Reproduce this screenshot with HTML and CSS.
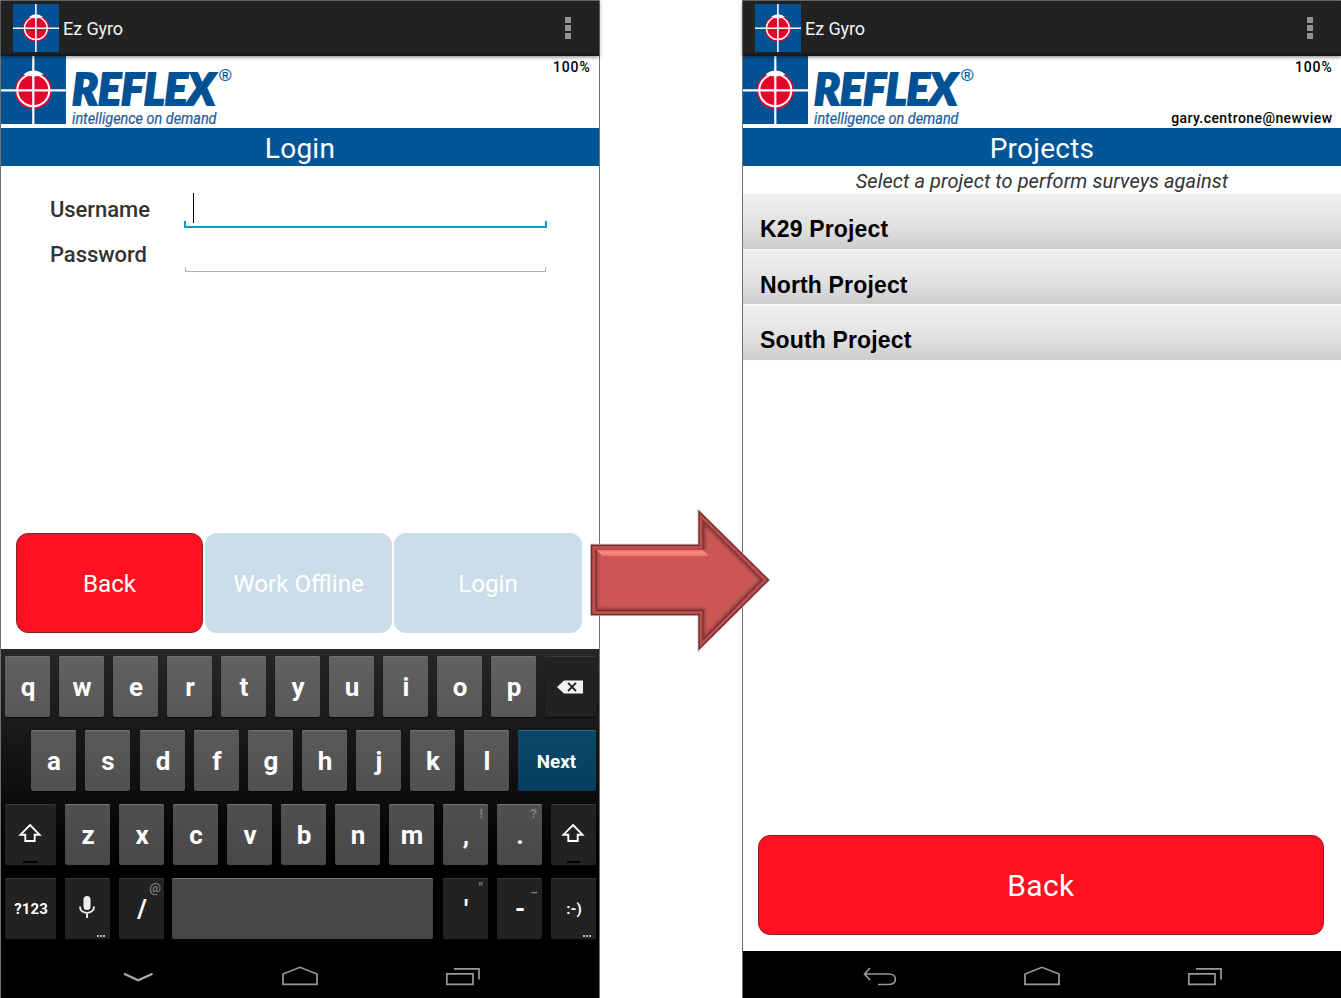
FILE: index.html
```html
<!DOCTYPE html>
<html lang="en">
<head>
<meta charset="utf-8">
<title>Ez Gyro</title>
<link rel="stylesheet" href="styles.css">
</head>
<body>
<svg class="defs" width="0" height="0" aria-hidden="true">
  <symbol id="target" viewBox="0 0 65 68" preserveAspectRatio="none">
    <rect width="65" height="68" fill="#005295"/>
    <circle cx="32.3" cy="34.5" r="18.6" fill="#e2062c"/>
    <path d="M32.3 0V68M0 34.3H65" stroke="#fff" stroke-width="2.2"/>
    <circle cx="32.3" cy="34.2" r="16" fill="none" stroke="#fff" stroke-width="2"/>
    <path d="M22.5 18.500Q27 14.500 32.500 14.500T42.500 18.500Q37 20.500 32.500 20.500T22.500 18.500Z" fill="#fff"/>
  </symbol>
  <symbol id="home" viewBox="0 0 38 22">
    <path d="M2 19.300V9L19 2.300L36 9V19.300Z" fill="none" stroke="#999" stroke-width="1.700"/>
  </symbol>
  <symbol id="recent" viewBox="0 0 38 22">
    <path d="M2.800 8.800H29V19.300H2.800ZM10 3.800H35V14.500" fill="none" stroke="#999" stroke-width="1.700"/>
  </symbol>
  <symbol id="shift" viewBox="0 0 24 20">
    <path d="M12 2L21.500 11.700H16.700V18H7.300V11.700H2.500Z" fill="none" stroke="#fff" stroke-width="1.900"/>
  </symbol>
</svg>

<main class="stage">
  <section class="phone">
    <header class="appbar">
      <svg class="app-icon"><use href="#target"/></svg>
      <span class="app-name">Ez Gyro</span>
      <span class="overflow"><i></i><i></i><i></i></span>
    </header>
    <div class="brandrow">
      <svg class="brand" viewBox="0 0 240 72">
        <use href="#target" width="65" height="68"/>
        <text class="brand-name" x="71" y="49.300" textLength="143" lengthAdjust="spacingAndGlyphs">REFLEX</text>
        <text class="brand-reg" x="218" y="24.500" textLength="12.500" lengthAdjust="spacingAndGlyphs">®</text>
        <text class="brand-tag" x="71" y="68" textLength="144.500" lengthAdjust="spacingAndGlyphs">intelligence on demand</text>
      </svg>
      <div class="status"><span>100%</span></div>
    </div>
    <h1 class="title">Login</h1>
    <form class="form">
      <label class="field"><span class="label">Username</span><span class="input focus"><i class="caret"></i></span></label>
      <label class="field"><span class="label">Password</span><span class="input"></span></label>
    </form>
    <div class="actions">
      <div class="btn red">Back</div>
      <div class="btn off">Work Offline</div>
      <div class="btn off">Login</div>
    </div>
    <div class="keyboard">
      <div class="row">
        <b class="key">q</b><b class="key">w</b><b class="key">e</b><b class="key">r</b><b class="key">t</b><b class="key">y</b><b class="key">u</b><b class="key">i</b><b class="key">o</b><b class="key">p</b>
        <b class="key dark grow"><svg class="del" viewBox="0 0 28 16"><path d="M1 8L8 1.500H27V14.500H8Z" fill="#f2f2f2"/><path d="M12 3.800L20 12M20 3.800L12 12" stroke="#222" stroke-width="1.800"/></svg></b>
      </div>
      <div class="row second">
        <b class="key">a</b><b class="key">s</b><b class="key shifted">d</b><b class="key">f</b><b class="key">g</b><b class="key">h</b><b class="key">j</b><b class="key">k</b><b class="key">l</b>
        <b class="key next grow">Next</b>
      </div>
      <div class="row">
        <b class="key dark wide"><svg class="shift"><use href="#shift"/></svg><i class="led"></i></b>
        <b class="key">z</b><b class="key">x</b><b class="key">c</b><b class="key">v</b><b class="key">b</b><b class="key">n</b><b class="key">m</b>
        <b class="key">,<small>!</small></b><b class="key">.<small>?</small></b>
        <b class="key dark"><svg class="shift"><use href="#shift"/></svg><i class="led short"></i></b>
      </div>
      <div class="row">
        <b class="key dark wide sym">?123</b>
        <b class="key dark"><svg class="mic" viewBox="0 0 18 24"><rect x="5.500" y="1" width="7" height="14" rx="3.500" fill="#eee"/><path d="M2 11.500C2 20 16 20 16 11.500M9 18V23" fill="none" stroke="#eee" stroke-width="1.900"/></svg><i class="dots"></i></b>
        <b class="key dark">/<small>@</small></b>
        <b class="key space grow"></b>
        <b class="key dark">'<small>"</small></b><b class="key dark">-<small>_</small></b>
        <b class="key dark smile">:-)<i class="dots"></i></b>
      </div>
    </div>
    <nav class="nav">
      <svg viewBox="0 0 38 22"><path d="M6 8.700L20.200 15.200L34.500 8.700" fill="none" stroke="#aaa" stroke-width="2.200"/></svg>
      <svg><use href="#home"/></svg>
      <svg><use href="#recent"/></svg>
    </nav>
  </section>

  <section class="phone">
    <header class="appbar">
      <svg class="app-icon"><use href="#target"/></svg>
      <span class="app-name">Ez Gyro</span>
      <span class="overflow"><i></i><i></i><i></i></span>
    </header>
    <div class="brandrow">
      <svg class="brand" viewBox="0 0 240 72">
        <use href="#target" width="65" height="68"/>
        <text class="brand-name" x="71" y="49.300" textLength="143" lengthAdjust="spacingAndGlyphs">REFLEX</text>
        <text class="brand-reg" x="218" y="24.500" textLength="12.500" lengthAdjust="spacingAndGlyphs">®</text>
        <text class="brand-tag" x="71" y="68" textLength="144.500" lengthAdjust="spacingAndGlyphs">intelligence on demand</text>
      </svg>
      <div class="status"><span>100%</span><span class="user">gary.centrone@newview</span></div>
    </div>
    <h1 class="title">Projects</h1>
    <p class="hint">Select a project to perform surveys against</p>
    <ul class="projects">
      <li>K29 Project</li>
      <li>North Project</li>
      <li>South Project</li>
    </ul>
    <div class="btn red big">Back</div>
    <nav class="nav">
      <svg viewBox="0 0 38 22"><path d="M10 3L4.500 9L10 15M4.500 9H29C37.500 9 37.500 19.500 29 19.500H18" fill="none" stroke="#999" stroke-width="1.700"/></svg>
      <svg><use href="#home"/></svg>
      <svg><use href="#recent"/></svg>
    </nav>
  </section>

  <svg class="arrow" viewBox="588 506 184 148">
    <defs>
      <clipPath id="inner"><path d="M596 550H703V520.500L762.500 580L703 640V610H596Z"/></clipPath>
      <filter id="soft" x="-10%" y="-10%" width="120%" height="120%"><feGaussianBlur stdDeviation="1.800"/></filter>
      <linearGradient id="shine" x1="0" y1="0" x2="0" y2="1"><stop offset="0" stop-color="#e06c69"/><stop offset=".5" stop-color="#ff8883"/><stop offset="1" stop-color="#ee706d"/></linearGradient>
    </defs>
    <path d="M591 544.500H698.500V510.500L769 580L698.500 650V615H591Z" fill="#b04442" stroke="#c4aaaa" stroke-width="1.600"/>
    <path d="M591.500 545.300H699V511.500L768.500 580L699 649V614.700H591.500Z" fill="#b24846" stroke="#762d2e" stroke-width="1.200"/>
    <path d="M593.800 547.500H701V516L765.300 580L701 644.500V612.500H593.800Z" fill="none" stroke="#c25350" stroke-width="1.300"/>
    <path d="M596 550H703V520.500L762.500 580L703 640V610H596Z" fill="#cc5755"/>
    <g clip-path="url(#inner)">
      <path d="M703 550V520.500L762.500 580L703 640" fill="none" stroke="#84383a" stroke-width="4.500" filter="url(#soft)"/>
      <path d="M703 640V610H596V550" fill="none" stroke="#8f4040" stroke-width="4" filter="url(#soft)"/>
      <path d="M596 549.500H702.500L709 556H602.500Z" fill="url(#shine)"/>
    </g>
    <path d="M703 549V520.500L762.500 580L703 640V610.500H596V550" fill="none" stroke="#752c2e" stroke-width="1"/>
  </svg>
</main>
</body>
</html>
```

FILE: styles.css
```css
* { box-sizing: border-box; }
body { margin: 0; background: #fff; font-family: Roboto, "Liberation Sans", sans-serif; overflow: hidden; }
.defs { position: absolute; }
.stage { position: relative; display: flex; gap: 142px; width: 1342px; height: 998px; }
.phone { display: flex; flex-direction: column; width: 600px; height: 998px; border: 1px solid #707070; border-bottom: 0; background: #fff; }

.appbar { display: flex; align-items: center; height: 55px; padding: 0 28px 0 12px; background: #222; border-bottom: 2px solid #191919; position: relative; box-shadow: 0 1px 4px rgba(0,0,0,.5); }
.app-icon { width: 46px; height: 48px; margin-top: 1px; }
.app-name { flex: 1; margin-left: 4px; padding-top: 2px; color: #f3f3f3; font-size: 18px; letter-spacing: -.08px; }
.overflow { display: grid; gap: 2px; margin-top: 1px; }
.overflow i { width: 6px; height: 6px; background: #929292; }

.brandrow { display: flex; justify-content: space-between; height: 72px; }
.brand { width: 240px; height: 72px; }
.brand-name { font: italic 900 43px Lato, sans-serif; fill: #005295; stroke: #005295; stroke-width: 2.200px; }
.brand-reg { font: 400 16px "Liberation Sans", sans-serif; fill: #005295; stroke: #005295; stroke-width: .2px; }
.brand-tag { font: italic 400 16px Roboto, sans-serif; fill: #1c5a9e; stroke: #1c5a9e; stroke-width: .2px; }
.status { display: flex; flex-direction: column; justify-content: space-between; align-items: flex-end; padding: 2px 8.500px 1px 0; font-size: 14px; line-height: 18px; font-weight: 500; letter-spacing: .8px; color: #000; }
.user { letter-spacing: .43px; }

.title { height: 38px; margin: 0; background: #005596; color: #fff; font-size: 28px; line-height: 41px; font-weight: 400; text-align: center; letter-spacing: .25px; }

.form { display: grid; grid-template-rows: 45px 45px; height: 367px; padding: 17px 52px 0 49px; align-content: start; }
.field { display: flex; align-items: flex-start; }
.label { width: 134px; padding-top: 14px; font-size: 22px; line-height: 26px; font-weight: 500; color: #333; letter-spacing: -.05px; }
.input { display: block; position: relative; width: 361px; height: 45px; margin-left: 1px; }
.input::after { content: ""; position: absolute; left: 0; right: 0; bottom: 1px; height: 4px; border: 1px solid #b0b0b0; border-top: 0; }
.input.focus { width: 363px; margin-left: 0; }
.input.focus::after { height: 5px; bottom: 0; border: solid #0099cc; border-width: 0 2px 2px; }
.caret { position: absolute; left: 9px; top: 10px; width: 1px; height: 30px; background: #000; }

.actions { display: grid; grid-template-columns: 187px 187px 188px; gap: 2px; height: 116px; padding-left: 15px; }
.btn { display: flex; align-items: center; justify-content: center; height: 100px; padding-top: 1px; border-radius: 12px; color: #fff; font-size: 24.200px; }
.red { background: #ff1121; border: 1.500px solid #8c2028; }
.off { background: #cbdde9; }
.big { margin: auto 17px 16px 15px; font-size: 30px; letter-spacing: .35px; }

.keyboard { display: grid; align-content: start; gap: 13px; height: 302px; padding: 7px 3px 0 4px; background: linear-gradient(#272727, #000 73%); }
.row { display: flex; gap: 9px; height: 61px; }
.row.second { padding-left: 26px; }
.key { position: relative; display: flex; align-items: center; justify-content: center; flex: 0 0 45px; height: 61px; padding-left: 1px; border-radius: 2px; background: linear-gradient(#626262, #575757); box-shadow: inset 0 1px #747474, 0 1px 1px #080808; color: #fff; font-size: 26px; font-weight: 700; }
.key.shifted { margin-left: 1px; }
.row:nth-child(2) .key { background: linear-gradient(#5a5a5a, #505050); }
.row:nth-child(3) .key { background: linear-gradient(#505050, #484848); }
.row:nth-child(4) .key { background: #464646; }
.row .key.dark { background: #222; box-shadow: inset 0 1px #383838, 0 1px 1px #080808; }
.row .key.next { background: linear-gradient(#0b4868, #053f5e); box-shadow: inset 0 1px #386780; font-size: 18.800px; padding: 2px 1px 0 0; }
.row .key.grow { flex: 1; }
.row .key.space { margin: 0 1px 0 -1px; }
.row .key.wide { flex-basis: 51px; }
.row .key.sym { font-size: 15px; letter-spacing: .1px; }
.row .key.smile { font-size: 15px; }
.key small { position: absolute; right: 5px; top: 2px; color: #808080; font-size: 13px; line-height: 16px; font-weight: 700; }
.key.dark:nth-child(3) small { right: 3px; font-weight: 500; }
.del { width: 28px; height: 16px; margin: 0 3px 0 0; }
.shift { width: 24px; height: 20px; margin: -3px 3px 0 0; }
.mic { width: 18px; height: 24px; margin: -3px 3px 0 0; }
.led { position: absolute; bottom: 2px; left: 18px; width: 15px; height: 2px; background: #000; }
.led.short { left: 16px; width: 13px; }
.dots { position: absolute; right: 5px; bottom: 2px; width: 8px; height: 2px; background: repeating-linear-gradient(90deg, #bbb 0 2px, transparent 2px 3px); }

.nav { display: flex; justify-content: center; gap: 125px; height: 47px; padding-top: 14px; background: #000; }
.nav svg { width: 38px; height: 22px; }

.hint { height: 28px; margin: 0; font-size: 20px; line-height: 30px; font-style: italic; letter-spacing: .07px; color: #333; text-align: center; }
.projects { margin: 0; padding: 0; list-style: none; }
.projects li { height: 55.500px; padding: 20px 0 0 17px; border-bottom: 1px solid #fafafa; background: linear-gradient(#f0f0f0, #e2e2e2 55%, #cdcdcd); font: 700 23px/30px "Liberation Sans", Arial, sans-serif; letter-spacing: .15px; color: #000; }

.arrow { position: absolute; left: 588px; top: 506px; width: 184px; height: 148px; }
```
